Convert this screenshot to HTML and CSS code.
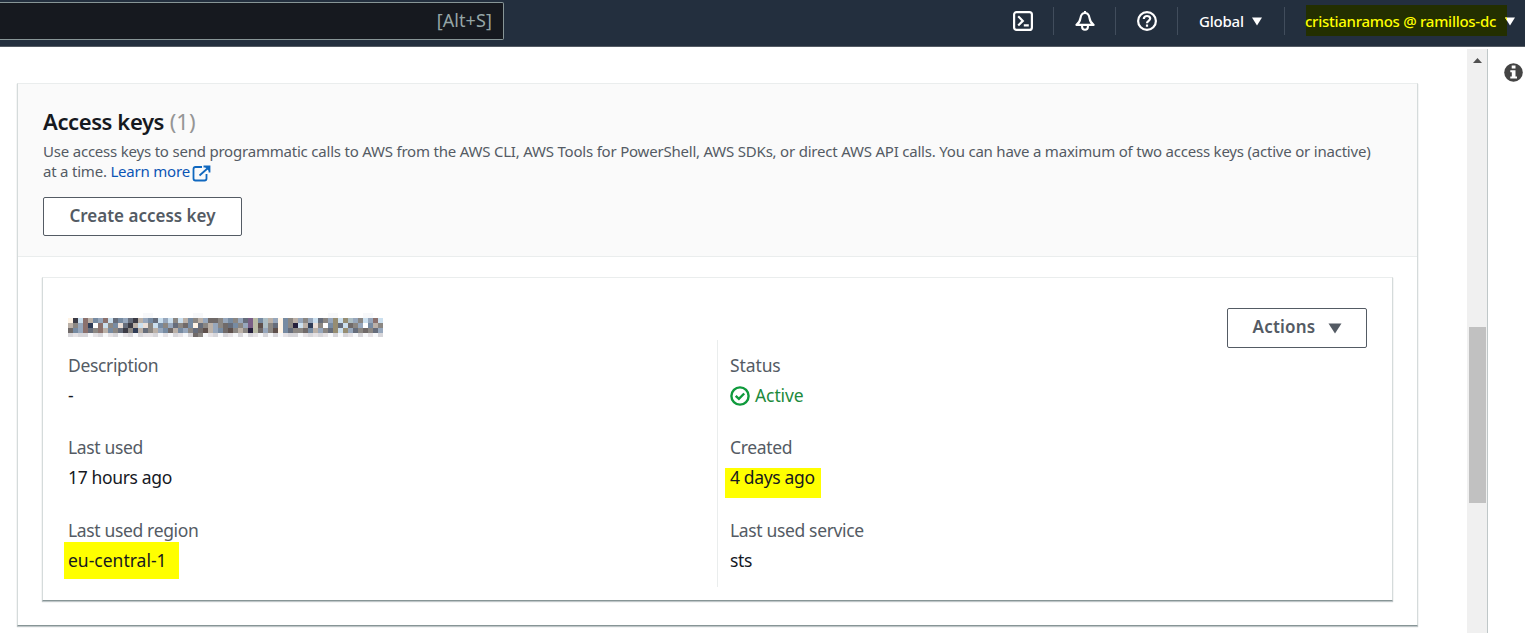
FILE: index.html
```html
<!DOCTYPE html>
<html lang="en">
<head>
<meta charset="utf-8">
<title>Access keys</title>
<link rel="stylesheet" href="styles.css">
</head>
<body>
<header class="topbar">
  <div class="search"><span class="search-hint">[Alt+S]</span></div>
  <nav class="nav">
    <div class="nav-item nav-icon">
      <svg width="22" height="22" viewBox="0 0 22 22" fill="none" stroke="#fff" stroke-width="2.2"><rect x="2.1" y="2.1" width="17.8" height="17.8" rx="2.5"/><path d="M6.2 6.3l4.6 4.6-4.6 4.6M11.8 15.4h5"/></svg>
    </div>
    <div class="nav-item nav-icon">
      <svg width="22" height="22" viewBox="0 0 22 22" fill="none" stroke="#fff" stroke-width="2.1"><path d="M11 1v2M2.4 14.9h17.2c-3-2.2-3.700-4.200-4.100-6.900C15 4.900 13.500 3 11 3S7 4.900 6.500 8c-.4 2.700-1.100 4.700-4.100 6.900z" stroke-linejoin="round"/><path d="M8.100 15v1.800a2.900 2.900 0 0 0 5.800 0V15"/></svg>
    </div>
    <div class="nav-item nav-icon">
      <svg width="22" height="22" viewBox="0 0 22 22" fill="none" stroke="#fff" stroke-width="2.2"><circle cx="11" cy="11" r="8.900"/><path d="M7.800 8.900C7.800 7 9.200 6 11 6s3.200 1 3.200 2.600c0 2.200-3.200 2.200-3.200 4.600M11 14.500v2.200"/></svg>
    </div>
    <div class="nav-item nav-region"><span class="region-text">Global</span><svg width="10" height="9" viewBox="0 0 10 9"><path d="M0 .5h10L5 8.500z" fill="#fff"/></svg></div>
    <div class="nav-item nav-user"><span class="user-mark"><span class="user-text">cristianramos @ ramillos-dc</span></span><svg class="user-caret" width="10" height="9" viewBox="0 0 10 9"><path d="M0 .5h10L5 8.500z" fill="#fff"/><path d="M0 .5h2v3.200z" fill="#ff0"/></svg></div>
  </nav>
</header>
<div class="page">
  <main class="content">
    <section class="card keys">
      <div class="keys-head">
        <h2 class="title"><span class="title-text">Access keys</span> <span class="count">(1)</span></h2>
        <p class="desc"><span>Use access keys to send programmatic calls to AWS from the AWS CLI, AWS Tools for PowerShell, AWS SDKs, or direct AWS API calls. You can have a maximum of two access keys (active or inactive)</span><br><span>at a time. <a class="link">Learn more</a></span><svg class="ext" width="19" height="17" viewBox="0 0 19 17" fill="none" stroke="#1068bf" stroke-width="1.800"><path d="M10 2H3.500Q1.500 2 1.500 4v9.500q0 2 2 2h9q2 0 2-2V9"/><path d="M7.500 10.500L16 3M11.500 1.500H17.500V7.500"/><path d="M12 1h6v6z" fill="#1068bf" stroke="none"/></svg></p>
        <button class="btn btn-create"><span>Create access key</span></button>
      </div>
      <div class="keys-body">
        <article class="card key">
          <div class="key-head">
            <svg class="mosaic" id="mosaic" width="315" height="25" viewBox="0 0 315 25" shape-rendering="crispEdges"></svg>
            <button class="btn btn-actions"><span>Actions</span><svg width="14" height="11" viewBox="0 0 14 11"><path d="M.5.500h13L7 10.500z" fill="#545b64"/></svg></button>
          </div>
          <div class="columns">
            <dl class="col">
              <div class="pair"><dt>Description</dt><dd>-</dd></div>
              <div class="pair"><dt>Last used</dt><dd>17 hours ago</dd></div>
              <div class="pair"><dt>Last used region</dt><dd><span class="mark mark-region">eu-central-1</span></dd></div>
            </dl>
            <dl class="col col-right">
              <div class="pair"><dt class="loose">Status</dt><dd class="active loose"><svg width="20" height="20" viewBox="0 0 20 20" fill="none" stroke="#0f9a3c" stroke-width="2.400"><circle cx="10" cy="10" r="8.600"/><path d="M5.700 9.800l3.200 3 5.300-5.300"/></svg><span>Active</span></dd></div>
              <div class="pair"><dt>Created</dt><dd><span class="mark mark-created">4 days ago</span></dd></div>
              <div class="pair"><dt>Last used service</dt><dd>sts</dd></div>
            </dl>
          </div>
        </article>
      </div>
    </section>
  </main>
  <div class="scrollbar">
    <svg class="scroll-up" width="9" height="5" viewBox="0 0 9 5"><path d="M4.500 0L9 5H0z" fill="#505050"/></svg>
    <div class="thumb"></div>
  </div>
  <aside class="rail">
    <svg width="19" height="19" viewBox="0 0 19 19"><circle cx="9.500" cy="9.500" r="9.300" fill="#444"/><path d="M7.700 2.500h3.800v3H7.700zM6.300 7.200h5.200v6.300h1.500v2H6.300v-2h1.500V9.200H6.300z" fill="#fff"/></svg>
  </aside>
</div>
<script src="mosaic.js"></script>
</body>
</html>
```
FILE: mosaic.js
```js
// Pixelated access key id: one letter per 5px block.
const palette = {
  a: '#3b3b45', b: '#666d7b', c: '#8b8783', d: '#bbb1a8', e: '#97a7bc',
  f: '#cbdfee', g: '#fff4e6', h: '#8b716d', i: '#706a69', j: '#eadfd8',
  k: '#25203c', l: '#968d72', m: '#ffffff', n: '#b9bba5', o: '#303d57',
  p: '#778ba2', q: '#5e504c', r: '#7a5f86', s: '#aebfc5',
  w: '#f7f8fa', x: '#e5e2e5', y: '#d7d6da'
};
const rows = [
  '               ww        ww                         ww     ww  ',
  'gafhdpehfbpebadepbfefcfdpcdeiicepcebrnpsdegpcdecefbcelflsecfehf',
  'dcehomhfcpjbadfjcfpcebcipgbcdecibpcernqscbgpckfdojcmplbficempdc',
  'ipehbchdpcbacodbcdepidpecbiqdepiqcdckniecqgpbccipdecblflebcicbe',
  'yxyywxywxywxywyxxywxwyxwyicwxywyxwywyxwywywxyywxyxyxwywyxwywxwy'
];
const svg = document.getElementById('mosaic');
rows.forEach((row, y) => {
  [...row].forEach((key, x) => {
    if (!palette[key]) return;
    const r = document.createElementNS('http://www.w3.org/2000/svg', 'rect');
    r.setAttribute('x', x * 5);
    r.setAttribute('y', y * 5);
    r.setAttribute('width', 5);
    r.setAttribute('height', y === 4 ? 4 : 5);
    r.setAttribute('fill', palette[key]);
    svg.appendChild(r);
  });
});
```
FILE: styles.css
```css
* { box-sizing: border-box; }
body {
  margin: 0;
  height: 633px;
  overflow: hidden;
  display: flex;
  flex-direction: column;
  background: #fff;
  color: #16191f;
  font-family: "Noto Sans", "Open Sans", sans-serif;
  font-size: 17.5px;
}
h2, p, dl, dd { margin: 0; }
svg { flex: none; }

.topbar {
  flex: none;
  height: 47px;
  display: flex;
  justify-content: space-between;
  align-items: flex-start;
  background: #232f3e;
  border-bottom: 1px solid #545b64;
}
.search {
  width: 504px;
  height: 38px;
  margin-top: 2px;
  padding: 0 11px 2px 0;
  display: flex;
  align-items: center;
  justify-content: flex-end;
  background: #16191f;
  border: 1px solid #879596;
  border-left: 0;
  border-radius: 0 2px 2px 0;
  color: #95a5a6;
}
.search-hint { font-size: 18px; letter-spacing: 0.1px; }
.nav { display: flex; padding-top: 7px; color: #fff; font-size: 15px; font-weight: 500; }
.nav-item {
  height: 28px;
  display: flex;
  align-items: center;
  border-left: 1px solid #414d5c;
}
.nav-icon { width: 62px; justify-content: center; padding-left: 1px; }
.nav-icon:first-child { border-left: 0; padding-left: 2px; }
.nav-region { width: 107px; padding-left: 21px; gap: 8px; }
.region-text { letter-spacing: -0.2px; }
.nav-user { width: 241px; padding-left: 21px; }
.user-text { letter-spacing: -0.27px; margin-left: -1px; }
.user-mark {
  width: 201px;
  height: 31px;
  margin-top: -2px;
  padding-top: 1px;
  display: flex;
  align-items: center;
  flex: none;
  background: #232f00;
  color: #ff0;
  white-space: nowrap;
}
.user-caret { margin-left: -2px; }

.page { flex: 1; display: flex; min-height: 0; }
.content { width: 1467px; padding: 36px 49px 0 17px; }
.card { border: 1px solid #d5dbdb; border-top-color: #eaeded; border-bottom-color: #879596; background: #fff; box-shadow: 0 1px 1px rgba(0, 28, 36, .25); }
.keys { height: 543px; }
.keys-head {
  height: 173px;
  padding: 23px 25px 0;
  background: #fafafa;
  border-bottom: 1px solid #eaeded;
}
.title { font-size: 22px; line-height: 28px; font-weight: 600; white-space: nowrap; }
.title-text { letter-spacing: -0.4px; }
.count { font-weight: 400; color: #959595; }
.desc { margin-top: 6px; height: 41px; font-size: 15px; line-height: 20px; letter-spacing: -0.208px; color: #545b64; white-space: nowrap; }
.link { color: #0b55b5; }
.ext { margin-left: 2px; vertical-align: -5px; }
.btn {
  display: flex;
  align-items: center;
  justify-content: center;
  background: #fff;
  border: 1px solid #545b64;
  border-radius: 2px;
  padding: 0 0 2px;
  font: 600 17px "Noto Sans", sans-serif;
  color: #545b64;
  white-space: nowrap;
}
.btn-create { width: 199px; height: 39px; margin-top: 15px; }
.btn-actions { width: 140px; height: 40px; padding: 0 0 3px 1px; gap: 13px; letter-spacing: 0.2px; }
.btn-actions svg { margin-top: 3px; }

.keys-body { padding: 20px 24px 0; }
.key { height: 324px; padding: 30px 25px 0; }
.key-head { height: 32px; display: flex; justify-content: space-between; align-items: flex-start; }
.mosaic { margin-top: 5px; }
.columns { display: grid; grid-template-columns: 649px 1fr; height: 247px; }
.col { display: flex; flex-direction: column; gap: 22px; padding-top: 10px; }
.pair:last-child { margin-top: 1px; }
.col-right { border-left: 1px solid #eaeded; padding-left: 12px; }
.pair { height: 60px; line-height: 30px; letter-spacing: -0.35px; white-space: nowrap; }
dt { color: #545b64; }
.loose { letter-spacing: -0.1px; }
.active { display: flex; align-items: center; gap: 5px; color: #1d8a3c; }
.active svg { margin-top: 2px; }
.mark { display: flex; background: #ff0; }
.mark-region { width: 115px; height: 37px; margin: -3px 0 0 -4px; padding: 3px 0 0 4px; letter-spacing: 0; }
.mark-created { width: 96px; height: 30px; margin: 6px 0 0 -5px; padding-left: 5px; line-height: 18px; }
dd:has(.mark) { display: flex; }

.scrollbar { width: 21px; display: flex; flex-direction: column; background: #f0f0f0; border-right: 1px solid #bfc7c8; margin-top: 2px; }
.scroll-up { margin: 9px 0 0 6px; }
.thumb { width: 17px; height: 176px; margin: 264px 0 0 2px; background: #c1c1c1; }
.rail { padding: 15.500px 0 0 15.500px; }
```
